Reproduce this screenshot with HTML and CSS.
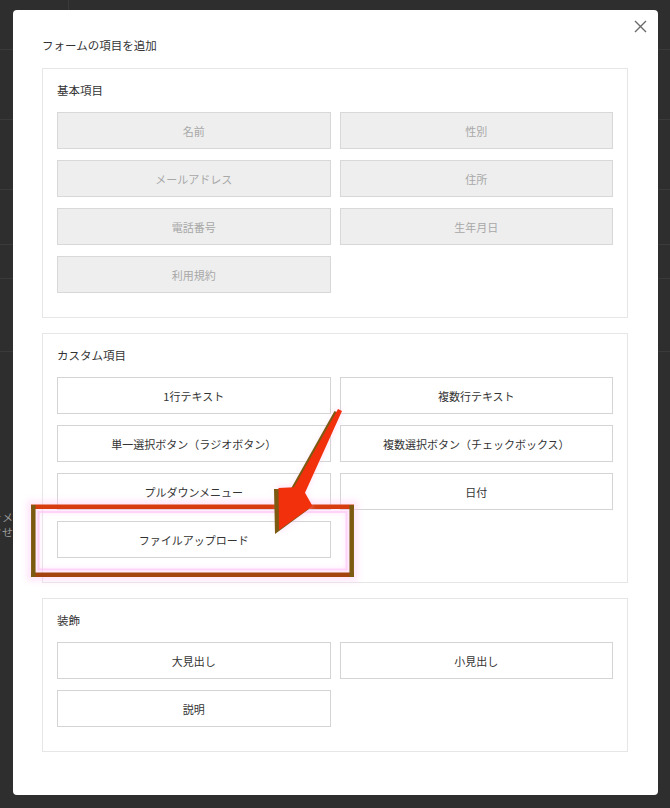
FILE: index.html
```html
<!DOCTYPE html>
<html lang="ja">
<head>
<meta charset="utf-8">
<title>フォームの項目を追加</title>
<link rel="stylesheet" href="styles.css">
</head>
<body>
<div class="page">
  <div class="backdrop">
    <div class="bg-top"><div class="bg-col"></div></div>
    <div class="bg-row r1"></div>
    <div class="bg-row r2"></div>
    <div class="bg-row r3"></div>
    <div class="bg-row r4"></div>
    <div class="bg-row r5"></div>
    <div class="bg-row r6"></div>
    <div class="bg-text"><span>ォメ</span><span>させ</span></div>
  </div>

  <div class="modal">
    <button class="close" aria-label="閉じる">
      <svg width="13" height="13" viewBox="0 0 13 13"><path d="M1 1L12 12M12 1L1 12" stroke="#6a6a6a" stroke-width="1.4" fill="none"/></svg>
    </button>
    <h1 class="title">フォームの項目を追加</h1>

    <section class="group">
      <h2 class="group-title">基本項目</h2>
      <div class="grid">
        <div class="item disabled">名前</div>
        <div class="item disabled">性別</div>
        <div class="item disabled">メールアドレス</div>
        <div class="item disabled">住所</div>
        <div class="item disabled">電話番号</div>
        <div class="item disabled">生年月日</div>
        <div class="item disabled">利用規約</div>
      </div>
    </section>

    <section class="group">
      <h2 class="group-title">カスタム項目</h2>
      <div class="grid">
        <div class="item">1行テキスト</div>
        <div class="item">複数行テキスト</div>
        <div class="item">単一選択ボタン（ラジオボタン）</div>
        <div class="item">複数選択ボタン（チェックボックス）</div>
        <div class="item">プルダウンメニュー</div>
        <div class="item">日付</div>
        <div class="item">ファイルアップロード</div>
      </div>
    </section>

    <section class="group">
      <h2 class="group-title">装飾</h2>
      <div class="grid">
        <div class="item">大見出し</div>
        <div class="item">小見出し</div>
        <div class="item">説明</div>
      </div>
    </section>
  </div>

  <svg class="annotation" width="670" height="808" viewBox="0 0 670 808">
    <defs>
      <filter id="glow" x="-20%" y="-20%" width="140%" height="140%">
        <feGaussianBlur stdDeviation="3"/>
      </filter>
    </defs>
    <rect x="33" y="506.5" width="319" height="68.5" fill="none" stroke="#ffc8f4" stroke-width="12" opacity="0.45" filter="url(#glow)"/>
    <rect x="38.5" y="512" width="308" height="57.5" fill="none" stroke="#ffc8f6" stroke-width="2" opacity="0.7"/>
    <line x1="31" y1="506.8" x2="354" y2="506.8" stroke="#d63c0e" stroke-width="4.5"/>
    <line x1="31" y1="574.7" x2="354" y2="574.7" stroke="#a3440f" stroke-width="4.5"/>
    <line x1="33.3" y1="505" x2="33.3" y2="577" stroke="#7d5a12" stroke-width="4.5"/>
    <line x1="351.7" y1="505" x2="351.7" y2="577" stroke="#7d5a12" stroke-width="4.5"/>
    <polygon points="337.5,409 341.5,411 304.5,492.7 312,507 278,532 277,487 293.6,487.3" fill="#ffc0f0" opacity="0.6" filter="url(#glow)"/>
    <polygon points="334.5,411 338.5,413 301.5,494.7 309,509 275,534 274,489 290.6,489.3" fill="#7d5a12"/>
    <polygon points="338,409 342,411 305,492.7 312.5,506 279,530 278.5,488 294,487.3" fill="#f2300c"/>
  </svg>
</div>
</body>
</html>
```

FILE: styles.css
```css
* { box-sizing: border-box; }

html, body {
  margin: 0;
  padding: 0;
}

body {
  width: 670px;
  height: 808px;
  overflow: hidden;
  background: #2f2f2f;
  font-family: "Noto Sans CJK JP", "Noto Sans", sans-serif;
  color: #333;
}

.page {
  position: relative;
  width: 670px;
  height: 808px;
}

.backdrop {
  display: flex;
  flex-direction: column;
  width: 670px;
  height: 808px;
  background: #2e2e2e;
}

.bg-top {
  height: 10px;
  display: flex;
}

.bg-col {
  width: 69px;
  border-right: 1px solid #3a3a3a;
}

.bg-row {
  border-bottom: 1px solid #3a3a3a;
}
.r1 { height: 40px; }
.r2 { height: 70px; }
.r3 { height: 70px; }
.r4 { height: 55px; }
.r5 { height: 34px; }
.r6 { height: 73px; }

.bg-text {
  margin-top: 158px;
  width: 13px;
  overflow: hidden;
  display: flex;
  flex-direction: column;
  align-items: flex-end;
  font-size: 11px;
  line-height: 15px;
  color: #9a9a9a;
  white-space: nowrap;
}

.modal {
  position: absolute;
  left: 13px;
  top: 10px;
  width: 645px;
  height: 785px;
  background: #fff;
  border-radius: 4px;
  padding: 26px 30px 0 29px;
}

.close {
  position: absolute;
  right: 11px;
  top: 10px;
  width: 13px;
  height: 13px;
  padding: 0;
  border: 0;
  background: none;
  display: flex;
}

.title {
  margin: 0 0 14px;
  font-size: 11.5px;
  line-height: 18px;
  font-weight: normal;
  color: #333;
}

.group {
  border: 1px solid #e6e6e6;
  padding: 12px 14px 24px;
  margin-bottom: 15px;
}

.group-title {
  margin: 0 0 13px;
  font-size: 11.5px;
  line-height: 18px;
  font-weight: normal;
  color: #333;
}

.grid {
  display: grid;
  grid-template-columns: 1fr 1fr;
  column-gap: 9px;
  row-gap: 11px;
}

.item {
  height: 37px;
  border: 1px solid #d4d4d4;
  background: #fff;
  display: flex;
  align-items: center;
  justify-content: center;
  font-size: 11px;
  color: #333;
}

.item.disabled {
  background: #eeeeee;
  border-color: #d8d8d8;
  color: #a8a8a8;
}

.annotation {
  position: absolute;
  left: 0;
  top: 0;
  pointer-events: none;
}
```
